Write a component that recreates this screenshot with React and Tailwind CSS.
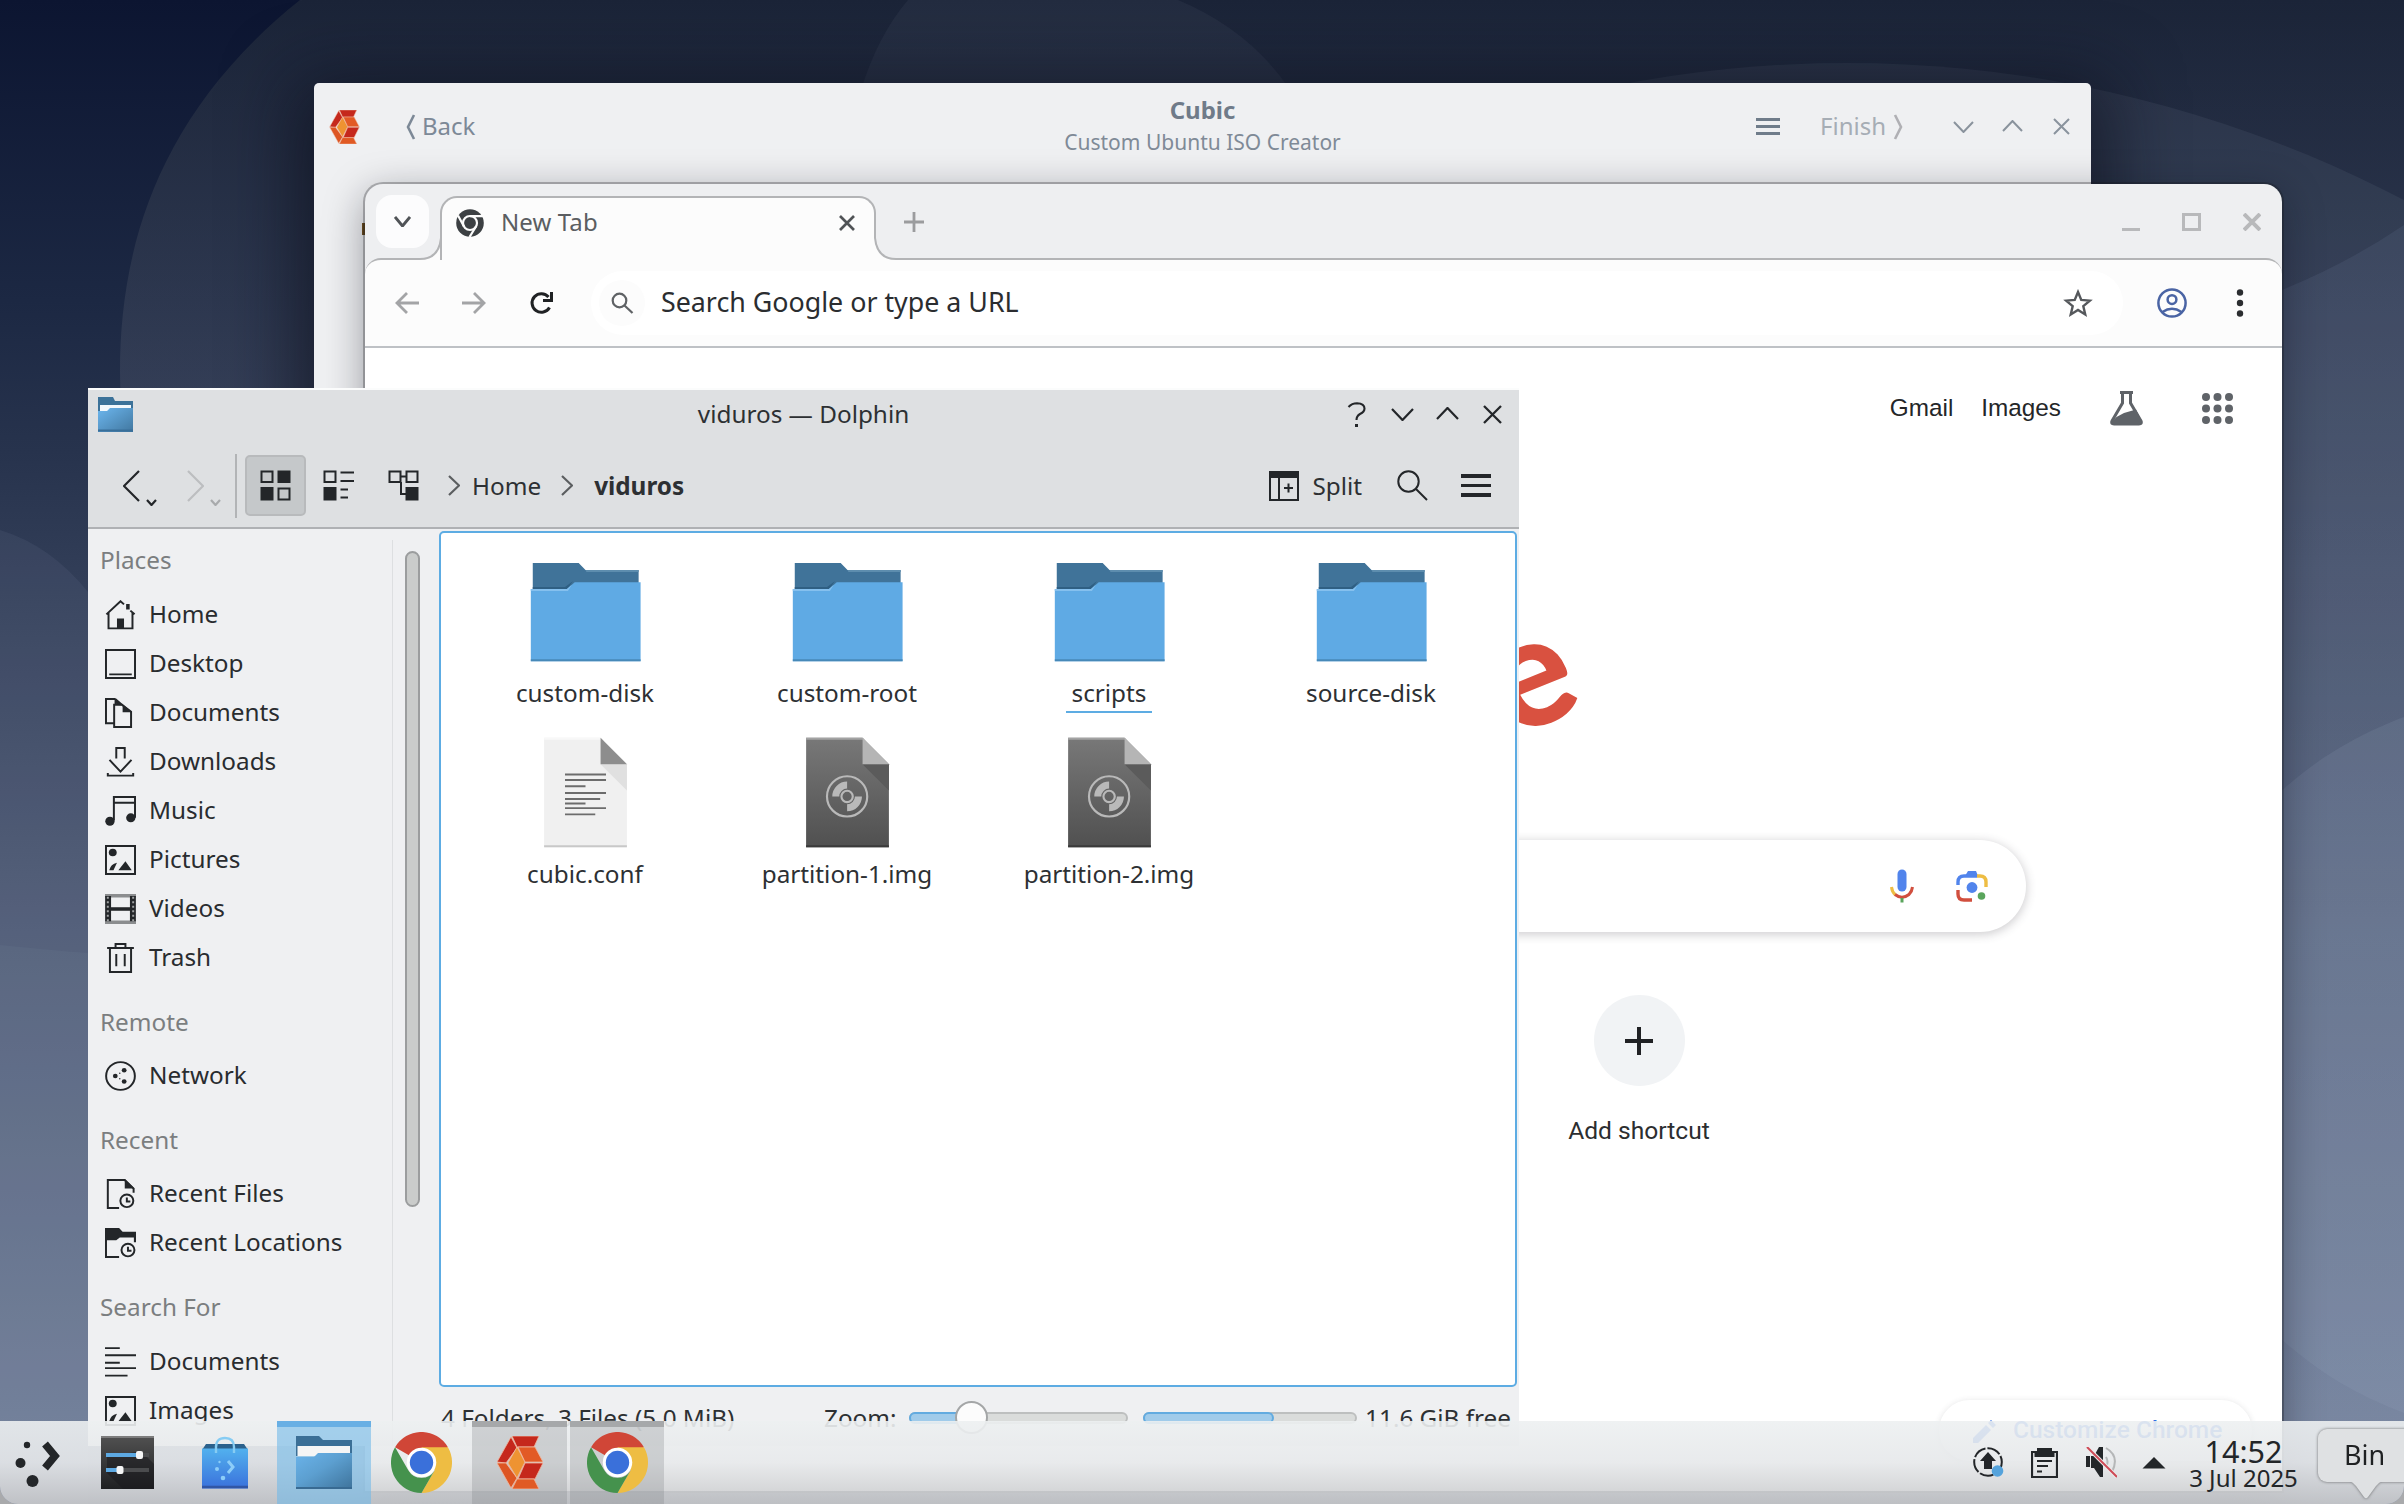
import React from "react";

const INK = "#232629";

/* ---------- wallpaper ---------- */
function Wallpaper() {
  return (
    <svg className="absolute inset-0" width="2404" height="1504" viewBox="0 0 2404 1504">
      <defs>
        <linearGradient id="sky" x1="0" y1="0" x2="0" y2="1">
          <stop offset="0" stopColor="#0c1531" />
          <stop offset="0.2" stopColor="#1c2843" />
          <stop offset="0.3" stopColor="#27334d" />
          <stop offset="0.62" stopColor="#505c76" />
          <stop offset="1" stopColor="#75829c" />
        </linearGradient>
        <linearGradient id="veil" gradientUnits="userSpaceOnUse" x1="0" y1="0" x2="0" y2="1504">
          <stop offset="0" stopColor="#3e4748" stopOpacity="0.3" />
          <stop offset="0.27" stopColor="#5b6176" stopOpacity="0.3" />
          <stop offset="0.6" stopColor="#77839c" stopOpacity="0.15" />
          <stop offset="1" stopColor="#8794ac" stopOpacity="0.1" />
        </linearGradient>
      </defs>
      <rect width="2404" height="1504" fill="url(#sky)" />
      <path d="M300 0 C150 120 120 260 120 372 C120 480 150 560 200 640 V1504 H2404 V0 Z" fill="url(#veil)" />
      <path d="M908 0 Q878 35 861 90 H1290 Q1250 30 1178 0 Z" fill="#e8ecff" opacity="0.045" />
      <circle cx="1847" cy="1263" r="1200" fill="#dfe6ff" opacity="0.06" />
      <path d="M2282 290 Q2350 262 2404 225 V1504 H2282 Z" fill="#8796b4" opacity="0.12" />
      <path d="M0 530 Q50 545 88 592 V1504 H0 Z" fill="#8a97b0" opacity="0.1" />
      <path d="M0 945 Q50 950 88 953 V1504 H0 Z" fill="#8a97b0" opacity="0.09" />
      <circle cx="2530" cy="1065" r="370" fill="#a5b6cc" opacity="0.12" />
    </svg>
  );
}

/* ---------- shared drawings ---------- */
function CubicLogo({ w, h }) {
  return (
    <svg width={w} height={h} viewBox="0 0 46 53" stroke="#f0b8a0" strokeWidth="0.8" strokeLinejoin="round">
      <path d="M15 0 H42 L37 11 H20 Z" fill="#c5281c" />
      <path d="M14 1 L20 12 L9 27 L0 26 Z" fill="#c5281c" />
      <path d="M0 27 L9 27 L20 42 L14 52 Z" fill="#dd5523" />
      <path d="M20 11 L28 26 L20 42 L11 27 Z" fill="#ee9332" />
      <path d="M21 11 H38 L46 26 H28 Z" fill="#e25a25" />
      <path d="M28 27 H46 L38 43 H21 Z" fill="#c5281c" />
      <path d="M20 43 H37 L42 53 H15 Z" fill="#e05a24" />
    </svg>
  );
}

function ChromeLogo() {
  return (
    <svg width="61" height="61" viewBox="0 0 48 48">
      <path d="M24 24 L3.2 12 A24 24 0 0 1 44.8 12 Z" fill="#d04637" />
      <path d="M24 12 H44.8 A24 24 0 0 1 24 48 L34.4 30 Z" fill="#eebd43" />
      <path d="M3.2 12 L13.6 30 A12 12 0 0 0 34.4 30 L24 48 A24 24 0 0 1 3.2 12 Z" fill="#45924d" />
      <circle cx="24" cy="24" r="11.6" fill="#fff" />
      <circle cx="24" cy="24" r="9.2" fill="#3a70da" />
    </svg>
  );
}

function Chevron({ dir = "down", w = 22, h = 12, color = INK, sw = 2.2 }) {
  const d = {
    down: `M1 1 L${w / 2} ${h - 1} L${w - 1} 1`,
    up: `M1 ${h - 1} L${w / 2} 1 L${w - 1} ${h - 1}`,
    left: `M${w - 1} 1 L1 ${h / 2} L${w - 1} ${h - 1}`,
    right: `M1 1 L${w - 1} ${h / 2} L1 ${h - 1}`,
  }[dir];
  return (
    <svg width={w} height={h} className="shrink-0" fill="none" stroke={color} strokeWidth={sw}>
      <path d={d} />
    </svg>
  );
}

function Cross({ s = 18, color = INK, sw = 2.3 }) {
  return (
    <svg width={s} height={s} className="shrink-0" stroke={color} strokeWidth={sw}>
      <path d={`M1 1 L${s - 1} ${s - 1} M${s - 1} 1 L1 ${s - 1}`} />
    </svg>
  );
}

/* ---------- Cubic window ---------- */
function CubicWindow() {
  return (
    <section className="absolute left-[314px] top-[83px] flex h-[1300px] w-[1777px] flex-col rounded-t-[5px] bg-[#eff0f2] shadow-[0_16px_70px_18px_rgba(10,12,24,0.6)]">
      <header className="grid h-[88px] grid-cols-[1fr_auto_1fr] items-center text-[24px] leading-[32px]">
        <div className="flex items-center pl-[15px] text-[#7d8997]">
          <CubicLogo w={31} h={34} />
          <svg width="10" height="26" className="ml-[46px]" fill="none" stroke="#7d8997" strokeWidth="2.6">
            <path d="M8 1 L2 13 L8 25" />
          </svg>
          <span className="mb-[2px] ml-[6px]">Back</span>
        </div>
        <div className="text-center text-[#6f7b89]">
          <div className="mt-[-2px] text-[24px] font-bold leading-[32px]">Cubic</div>
          <div className="text-[21px] leading-[32px] text-[#7f8a97]">Custom Ubuntu ISO Creator</div>
        </div>
        <div className="flex items-center justify-end pr-[21px] text-[#a6adb5]">
          <div className="mb-[1px] flex w-[24px] flex-col gap-[4px]">
            <i className="h-[3px] bg-[#6f7c8a]" />
            <i className="h-[3.5px] bg-[#6f7c8a]" />
            <i className="h-[3px] bg-[#6f7c8a]" />
          </div>
          <span className="mb-[2px] ml-[40px]">Finish</span>
          <svg width="10" height="26" className="ml-[7px]" fill="none" stroke="#b0b0b4" strokeWidth="2.6">
            <path d="M2 1 L8 13 L2 25" />
          </svg>
          <span className="ml-[50px] flex items-center gap-[29px]">
            <Chevron w={21} h={12} color="#8a939d" sw={2} />
            <span className="mb-[2px] ml-[-1px] mr-[1px]"><Chevron dir="up" w={21} h={12} color="#8a939d" sw={2} /></span>
            <span className="mb-[2px]"><Cross s={17} color="#8a939d" sw={2} /></span>
          </span>
        </div>
      </header>
      <i className="ml-[48px] mt-[52px] h-[12px] w-[3px] bg-[#6d4c1c]" />
    </section>
  );
}

/* ---------- Chrome window ---------- */
function TabFoot({ flip }) {
  return (
    <svg width="22" height="22" className={flip ? "z-10 ml-[-2px] -scale-x-100" : "z-10 mr-[-2px]"} fill="none">
      <path d="M0 22 V21 Q20 21 21 0 H22 V22 Z" fill="#fcfcfc" />
      <path d="M0 21 Q19 21 21 0" stroke="#b3b4b6" strokeWidth="2" />
    </svg>
  );
}

function ChromeWindow() {
  return (
    <section className="absolute left-[365px] top-[184px] flex h-[1307px] w-[1917px] flex-col rounded-t-[18px] bg-[#eeeff1] shadow-[0_0_0_2px_rgba(20,20,24,0.28),0_10px_40px_rgba(10,12,24,0.4)]">
      <div className="flex h-[76px] items-end">
        <button className="mb-[12px] ml-[11px] flex size-[53px] items-center justify-center rounded-[16px] bg-[#fcfcfd]">
          <Chevron w={17} h={11} color="#505357" sw={2.900} />
        </button>
        <div className="ml-[-9px] flex items-end">
          <TabFoot />
          <div className="z-10 flex h-[64px] w-[436px] items-center rounded-t-[17px] border-2 border-b-0 border-[#b3b4b6] bg-[#fcfcfc] pb-[13px] pl-[14px] pr-[19px]">
            <svg width="28" height="28" viewBox="0 0 28 28">
              <circle cx="14" cy="14" r="13.8" fill="#3c4043" />
              <circle cx="14" cy="14" r="7" fill="none" stroke="#fcfcfc" strokeWidth="2.2" />
              <path d="M14 7.2 H27 M8 17.5 L2 6.5 M20 17.5 L13.5 28" stroke="#fcfcfc" strokeWidth="2.2" />
            </svg>
            <span className="ml-[17px] flex-1 pb-[1px] text-[24px] leading-[32px] tracking-[0.1px] text-[#5b5e61]">New Tab</span>
            <Cross s={16} color="#505356" sw={2.700} />
          </div>
          <TabFoot flip />
        </div>
        <svg width="20" height="20" className="mb-[28px] ml-[8px]" stroke="#9b9c9e" strokeWidth="2.8">
          <path d="M10 0 V20 M0 10 H20" />
        </svg>
        <div className="mb-[29px] ml-auto mr-[21px] flex items-end gap-[42px]">
          <i className="h-[3.5px] w-[18px] bg-[#b8b9bb]" />
          <i className="h-[18px] w-[19px] border-[3.5px] border-[#b8b9bb]" />
          <Cross s={18} color="#b8b9bb" sw={4} />
        </div>
      </div>
      <div className="mt-[-2px] flex h-[90px] shrink-0 items-center rounded-t-[16px] border-b-2 border-t-2 border-b-[#bec1c5] border-t-[#b3b4b6] bg-[#fcfcfc] pl-[30px]">
        <svg width="24" height="22" fill="none" stroke="#a3a4a6" strokeWidth="2.8">
          <path d="M24 11 H2 M12 1 L2 11 L12 21" />
        </svg>
        <svg width="24" height="22" className="ml-[43px]" fill="none" stroke="#a3a4a6" strokeWidth="2.8">
          <path d="M0 11 H22 M12 1 L22 11 L12 21" />
        </svg>
        <svg width="24" height="24" className="ml-[43px]" fill="none" stroke="#202224" strokeWidth="3">
          <path d="M20.5 16.5 A9.3 9.3 0 1 1 19.5 6" />
          <path d="M22.5 1 V9.5 H14" />
        </svg>
        <div className="ml-[38px] flex h-[64px] w-[1532px] items-center rounded-full bg-white pl-[8px] pr-[30px]">
          <span className="flex size-[46px] items-center justify-center rounded-full bg-[#fcfcfc]">
            <svg width="23" height="22" fill="none" stroke="#5f6265" strokeWidth="2.2">
              <circle cx="8.5" cy="8.5" r="6.8" />
              <path d="M13.5 13.5 L21.5 21" />
            </svg>
          </span>
          <span className="ml-[16px] flex-1 whitespace-nowrap pb-[2px] text-[26.800px] leading-[34px] text-[#2b2d30]">
            Search Google or type a URL
          </span>
          <svg width="30" height="29" viewBox="0 0 24 24" fill="none" stroke="#55585c" strokeWidth="2">
            <path d="M12 2.5 L14.7 9 L21.8 9.6 L16.4 14.2 L18 21.1 L12 17.4 L6 21.1 L7.6 14.2 L2.2 9.6 L9.3 9 Z" />
          </svg>
        </div>
        <svg width="30" height="30" className="ml-[34px]" fill="none" stroke="#4a64a4" strokeWidth="2.5">
          <circle cx="15" cy="15" r="13.6" />
          <circle cx="15" cy="11.6" r="4.4" />
          <path d="M5.5 24 Q15 17.5 24.5 24" />
        </svg>
        <svg width="8" height="28" className="ml-[49px]" fill="#2b2d30">
          <circle cx="4" cy="3.5" r="3.2" />
          <circle cx="4" cy="14" r="3.2" />
          <circle cx="4" cy="24.5" r="3.2" />
        </svg>
      </div>
      <div className="flex flex-1 flex-col bg-white">
        <div className="mt-[40px] flex h-[40px] items-center justify-end pr-[49px] font-['Liberation_Sans',Arial,sans-serif] text-[24.300px] text-[#242628]">
          <span>Gmail</span>
          <span className="ml-[28px]">Images</span>
          <svg width="35" height="35" className="ml-[48px]" viewBox="0 0 35 35">
            <path d="M11 1.5 H24 M13.5 2 V12 L3 30 Q1.5 33 5 33 H30 Q33.5 33 32 30 L21.500 12 V2" fill="none" stroke="#5f6368" strokeWidth="3" />
            <path d="M7.500 26 L15 22 L27 18.500 L33 31 L30 34 H4 L2.500 31 Z" fill="#5f6368" />
          </svg>
          <svg width="31" height="31" className="ml-[58px]" fill="#5f6368">
            {[4, 15.5, 27].map((y) => [4, 15.500, 27].map((x) => <circle key={x + "-" + y} cx={x} cy={y} r="4" />))}
          </svg>
        </div>
        <div className="ml-[1119px] mt-[150px] flex h-[180px] w-[84px] items-center justify-center">
          <span className="-rotate-[22deg] font-['Lato',sans-serif] text-[154px] font-black leading-[180px] text-[#d95140]">e</span>
        </div>
        <div className="ml-[255px] mt-[82px] flex h-[92px] w-[1406px] items-center justify-end rounded-full bg-white pr-[38px] shadow-[0_2px_10px_1px_rgba(64,60,67,0.24)]">
          <svg width="24" height="34" fill="none" strokeWidth="3">
            <path d="M1.500 18 Q2 23 5.500 26" stroke="#eebd43" />
            <path d="M5 25.500 Q12 31 19 25.500 Q22 22.500 22.500 18" stroke="#d14f3e" />
            <path d="M12 29 V33.500" stroke="#5aa55c" />
            <rect x="7.500" y="0.500" width="9" height="22" rx="4.500" fill="#5184ec" />
          </svg>
          <svg width="32" height="32" className="ml-[42px]" fill="none" strokeWidth="3.400">
            <path d="M2 15 V12 Q2 6 8 6 H21" stroke="#5184ec" />
            <path d="M9 6 L12 1 H20 L22.500 7 H9 Z" fill="#5184ec" />
            <path d="M21 6 H24 Q30 6 30 12 V17" stroke="#eebd43" />
            <path d="M2 20 V24 Q2 30 8 30 H16" stroke="#d14f3e" />
            <circle cx="16" cy="17.500" r="5.400" fill="#5184ec" />
            <circle cx="25.500" cy="26" r="3.800" fill="#5aa55c" />
          </svg>
        </div>
        <div className="ml-[1174px] mt-[63px] flex w-[200px] flex-col items-center">
          <span className="flex size-[91px] items-center justify-center rounded-full bg-[#f1f3f5]">
            <svg width="28" height="28" stroke="#202124" strokeWidth="4">
              <path d="M14 0 V28 M0 14 H28" />
            </svg>
          </span>
          <span className="mt-[29px] font-['Roboto',sans-serif] text-[24.600px] leading-[32px] text-[#2c2e30]">Add shortcut</span>
        </div>
        <div className="mb-[30px] mr-[30px] mt-auto flex h-[61px] w-[313px] items-center self-end rounded-full bg-white pl-[34px] pb-[3px] shadow-[0_1px_6px_rgba(60,64,67,0.16)]">
          <svg width="23" height="23" fill="#2f6fe4" className="mt-[4px]">
            <path d="M0 23 V18 L13 5 L18 10 L5 23 Z M15 3 L18 0 L23 5 L20 8 Z" />
          </svg>
          <span className="ml-[17px] mt-[2px] whitespace-nowrap font-['Roboto',sans-serif] text-[24.500px] font-medium tracking-[0px] text-[#2f6fe4]">Customize Chrome</span>
        </div>
      </div>
    </section>
  );
}

/* ---------- Dolphin sidebar icons (22 px grid) ---------- */
const clock = (
  <g>
    <circle cx="15.500" cy="16" r="4.600" />
    <path d="M15.500 13.500 V16.500 H18" />
  </g>
);
const ICONS = {
  home: (
    <g>
      <path d="M1 10.500 L11 0.900 L13.500 3.200 M18 7.800 L21 10.500 M2.500 9.500 V20.800 H19.500 V9.500" />
      <path d="M15 3 H17.500 V7 H15 Z M8.500 13.500 H13.500 V21 H8.500 Z" fill={INK} stroke="none" />
    </g>
  ),
  desktop: <path d="M0.700 0.700 H21.300 V21.300 H0.700 Z M3 18.600 H19" />,
  documents: (
    <g>
      <path d="M6 18.500 H0.700 V0.700 H7.500 M6.500 5 H12 L18.500 10 V21.300 H6.500 Z M7.500 0.700 V5" />
      <path d="M7.500 0 L19.200 10.500 H12.500 V5.500 L8 5 Z" fill={INK} stroke="none" />
    </g>
  ),
  downloads: <path d="M8 8.500 V0.700 H14 V8.500 M3.200 9.500 L11 18 L18.800 9.500 M2 19 V21 H20 V19" />,
  music: (
    <g>
      <path d="M6.300 18 V0.700 H21.300 V16 M6.300 5 H21.300" />
      <circle cx="3.500" cy="18.500" r="3.300" fill={INK} stroke="none" />
      <circle cx="18.300" cy="16" r="3.300" fill={INK} stroke="none" />
    </g>
  ),
  pictures: (
    <g>
      <path d="M0.700 0.700 H21.300 V21.300 H0.700 Z" />
      <circle cx="5.500" cy="5.500" r="2.800" fill={INK} stroke="none" />
      <path d="M3 18.500 Q4 14 8.500 13 L6 18.500 Z M9.500 18.500 L14.500 12 L19 18.500 Z" fill={INK} stroke="none" />
    </g>
  ),
  videos: (
    <g>
      <path d="M0 1.200 H22 M0 20.800 H22" stroke="#8b8d8f" strokeWidth="2.600" />
      <path d="M2.200 1.500 V20 M19.800 1.500 V20" strokeWidth="4.200" />
      <path d="M2 2 V20 M20 2 V20" stroke="#a0a2a3" strokeDasharray="1.500 1.800" />
      <path d="M3 11 H19" strokeWidth="2.600" />
    </g>
  ),
  trash: <path d="M1.500 3.700 H20.500 M7.500 3.500 V0.700 H14.500 V3.500 M3.500 4 V21.300 H18.500 V4 M8 8 V17 M14 8 V17" />,
  network: (
    <g>
      <circle cx="11" cy="11" r="10.200" />
      <g fill={INK} stroke="none">
        <circle cx="7.300" cy="11" r="1.700" />
        <circle cx="13.600" cy="6.800" r="1.700" />
        <circle cx="13.600" cy="15" r="1.700" />
        <circle cx="10.500" cy="9" r="0.500" />
        <circle cx="10.500" cy="13" r="0.500" />
      </g>
    </g>
  ),
  recentFiles: (
    <g>
      <path d="M10 21.300 H2 V0.700 H14 L20.300 7 V10" />
      <path d="M14 0 L21 7 H14 Z" fill={INK} stroke="none" />
      {clock}
    </g>
  ),
  recentFolders: (
    <g>
      <path d="M10 21.300 H0.700 V5" />
      <path d="M0 0 H10 L12.500 2.800 H22 V10.500 H20.500 V7 H10.500 L8 9 H0 Z" fill={INK} stroke="none" />
      <g transform="translate(0.800 0.200)">{clock}</g>
    </g>
  ),
  lines: <path d="M0 0.800 H10.500 M0 6 H22 M0 11.500 H10.500 M0 15.500 H22 M0 21 H16" />,
};

const PLACES = [
  ["Places", [["home", "Home"], ["desktop", "Desktop"], ["documents", "Documents"], ["downloads", "Downloads"], ["music", "Music"], ["pictures", "Pictures"], ["videos", "Videos"], ["trash", "Trash"]]],
  ["Remote", [["network", "Network"]]],
  ["Recent", [["recentFiles", "Recent Files"], ["recentFolders", "Recent Locations"]]],
  ["Search For", [["lines", "Documents"], ["pictures", "Images"]]],
];

function Sidebar() {
  return (
    <aside className="mt-[-8px] w-[304px] shrink-0 pl-[12px] text-[24.300px]">
      {PLACES.map(([title, rows]) => (
        <div key={title}>
          <h3 className="flex h-[69.3px] items-end pb-[14px] leading-[32px] text-[#7b7e80]">{title}</h3>
          {rows.map(([icon, label]) => (
            <div key={label} className="flex h-[49px] items-center pl-[5px] text-[#292c2f]">
              <svg width="31" height="30" viewBox="0 0 22 22" preserveAspectRatio="none" className="shrink-0" fill="none" stroke={INK} strokeWidth="1.400">
                {ICONS[icon]}
              </svg>
              <span className="ml-[13px] whitespace-nowrap pb-[2px] leading-[32px]">{label}</span>
            </div>
          ))}
        </div>
      ))}
    </aside>
  );
}

/* ---------- Dolphin file icons (64 px grid) ---------- */
function FolderIcon() {
  return (
    <svg width="125" height="125" viewBox="0 0 64 64">
      <path d="M5 7.200 H28.500 L32 10.800 H59.200 V24 H5 Z" fill="#407399" />
      <path d="M32 10.800 H59.200 V11.800 H32.500 Z" fill="#5d8dae" />
      <path d="M5 19.400 H21.500 L25.500 16.500 L22.500 21 H5 Z" fill="#2f5f83" />
      <path d="M4 20.500 H22.500 L26.500 17 H60.200 V57.500 H4 Z" fill="#5faae4" />
      <path d="M4 20.500 H22.500 L25 18.300 L23 21.500 H4 Z" fill="#85c0ee" />
      <path d="M4 56.500 H60.200 V57.500 H4 Z" fill="#4789b8" />
    </svg>
  );
}

function PageIcon({ dark }) {
  return (
    <svg width="125" height="125" viewBox="0 0 64 64">
      <defs>
        <linearGradient id="pgDark" x1="0" y1="0" x2="0" y2="1">
          <stop offset="0" stopColor="#787878" />
          <stop offset="1" stopColor="#505050" />
        </linearGradient>
      </defs>
      <path d="M10.800 4 H39.700 L53.200 17.500 V60 H10.800 Z" fill={dark ? "url(#pgDark)" : "#f0f0f0"} />
      <path d="M10.800 4 H39.700 L40.700 5 H10.800 Z" fill={dark ? "#a3a3a3" : "#f8f8f8"} />
      <path d="M10.800 59 H53.200 V60 H10.800 Z" fill={dark ? "#3a3a3a" : "#c8c8c8"} />
      <path d="M39.700 17.500 H53.200 V31 Z" fill={dark ? "#5b5b5b" : "#e0e0e0"} />
      <path d="M39.700 4 L53.200 17.500 H39.700 Z" fill={dark ? "#b5b5b5" : "#8d8d8d"} />
      {dark ? (
        <g fill="none" stroke="#b9b9b9" strokeWidth="1.100">
          <circle cx="31.800" cy="34" r="10.300" />
          <circle cx="31.800" cy="34" r="2.900" />
          <path d="M26 34 A5.800 5.800 0 0 1 31.800 28.200 M37.600 34 A5.800 5.800 0 0 1 31.800 39.800" strokeWidth="3.600" />
        </g>
      ) : (
        <path
          d="M21.500 22.800 H42.500 M21.500 25.600 H42.500 M21.500 28.800 H32 M21.500 32.300 H42.500 M21.500 35.300 H39.500 M21.500 37.600 H32 M21.500 40 H42.500 M21.500 43.200 H37"
          stroke="#6c6c6c"
          strokeWidth="1"
        />
      )}
    </svg>
  );
}

const FILES = [
  ["custom-disk", "folder"],
  ["custom-root", "folder"],
  ["scripts", "folder"],
  ["source-disk", "folder"],
  ["cubic.conf", "text"],
  ["partition-1.img", "image"],
  ["partition-2.img", "image"],
];

function FileView() {
  return (
    <div className="h-[856px] rounded-[5px] border-2 border-[#5dace3] bg-white pl-[13px] pt-[16px]">
      <div className="grid w-[1048px] grid-cols-4">
        {FILES.map(([name, kind]) => (
          <div key={name} className="flex h-[181px] flex-col items-center">
            {kind === "folder" ? <FolderIcon /> : <PageIcon dark={kind === "image"} />}
            <span
              className={
                name === "scripts"
                  ? "mt-[2px] border-b-[2.500px] border-[#5dace3] px-[6px] pb-[2px] text-[24.300px] leading-[33px] text-[#2d3033]"
                  : "mt-[2px] text-[24.300px] leading-[33px] text-[#2d3033]"
              }
            >
              {name}
            </span>
          </div>
        ))}
      </div>
    </div>
  );
}

/* ---------- Dolphin window ---------- */
function DolphinWindow() {
  return (
    <section className="absolute left-[88px] top-[388px] flex h-[1058px] w-[1431px] flex-col overflow-hidden bg-[#eff0f2] text-[24.300px] text-[#2d3033]">
      <div className="shrink-0 border-b-2 border-t-2 border-b-[#afb1b4] border-t-[#fbfcfc] bg-[#dee0e2]">
        <div className="grid h-[50px] grid-cols-[1fr_auto_1fr] items-center">
          <svg width="36" height="35" className="mb-[1px] ml-[10px]">
            <defs>
              <linearGradient id="smf" x1="0" y1="0" x2="1" y2="1">
                <stop offset="0" stopColor="#6cb6ee" />
                <stop offset="1" stopColor="#41779f" />
              </linearGradient>
            </defs>
            <path d="M0 0 H15 L17 4 H35 V14 H0 Z" fill="#3c7299" />
            <path d="M2 8 H33 V15 H2 Z" fill="#f3f8fc" />
            <path d="M0 14 H9 L12 11 H35 V35 H0 Z" fill="url(#smf)" />
            <path d="M0 32.500 H35 V34.500 H0 Z" fill="#396f99" />
          </svg>
          <span className="pb-[2px] leading-[32px]">viduros — Dolphin</span>
          <div className="flex items-center justify-end pb-[1px] pr-[17px]">
            <svg width="19" height="25" fill="none" stroke={INK} strokeWidth="2.100">
              <path d="M1.500 5 Q5 1.200 10 1.200 Q17.500 1.500 17.500 6.500 Q17.500 10 13 12 Q9.500 14 9.500 18" />
              <path d="M8 23.500 H11" strokeWidth="3" />
            </svg>
            <span className="ml-[25px]"><Chevron w={23} h={13} /></span>
            <span className="mb-[2px] ml-[22px]"><Chevron dir="up" w={23} h={13} /></span>
            <span className="ml-[24px]"><Cross s={19} /></span>
          </div>
        </div>
        <div className="flex h-[87px] items-center pl-[35px] pt-[4px]">
          <span className="flex items-end">
            <Chevron dir="left" w={17} h={32} />
            <span className="mb-[-4px] ml-[6px]"><Chevron w={11} h={7} /></span>
          </span>
          <span className="ml-[30px] flex items-end">
            <Chevron dir="right" w={17} h={32} color="#bcbec0" />
            <span className="mb-[-4px] ml-[6px]"><Chevron w={11} h={7} color="#a8aaac" /></span>
          </span>
          <i className="ml-[14px] h-[64px] w-[2px] bg-[#b2b4b6]" />
          <span className="ml-[8px] flex size-[61px] items-center justify-center rounded-[5px] border-2 border-[#b8babc] bg-[#c5c8ca]">
            <svg width="31" height="31" fill="none" stroke={INK} strokeWidth="2">
              <path d="M1.500 1.500 H12.500 V12 H1.500 Z M18.500 18.500 H29.500 V29.500 H18.500 Z" />
              <path d="M17.500 0.500 H30.500 V13 H17.500 Z M0.500 17 H13.500 V30.500 H0.500 Z" fill={INK} stroke="none" />
            </svg>
          </span>
          <svg width="31" height="31" className="ml-[17px]" fill="none" stroke={INK} strokeWidth="2">
            <path d="M1.500 1.500 H12.500 V12 H1.500 Z M17.500 2.500 H31 M17.500 11 H31 M17.500 19.500 H25 M17.500 27.500 H25" />
            <path d="M0.500 17 H13.500 V30.500 H0.500 Z" fill={INK} stroke="none" />
          </svg>
          <svg width="31" height="31" className="ml-[34px]" fill="none" stroke={INK} strokeWidth="2">
            <path d="M1.500 1.500 H12.500 V12 H1.500 Z M18.500 1.500 H29.500 V12 H18.500 Z M12.500 6.500 H18.500 M13 12 V24 H19" />
            <path d="M17.500 17 H30.500 V30.500 H17.500 Z" fill={INK} stroke="none" />
          </svg>
          <span className="ml-[29px]"><Chevron dir="right" w={12} h={21} color="#5b5e60" /></span>
          <span className="ml-[12px] leading-[32px]">Home</span>
          <span className="ml-[20px]"><Chevron dir="right" w={12} h={21} color="#5b5e60" /></span>
          <span className="ml-[21px] font-bold leading-[32px]">viduros</span>
          <div className="ml-auto flex items-center pr-[28px]">
            <svg width="30" height="30" fill="none" stroke={INK} strokeWidth="2">
              <path d="M1 1 H29 V29 H1 Z M10 5 V29 M19.500 12.500 V21.500 M15 17 H24" />
              <path d="M0 0 H30 V7 H0 Z" fill={INK} stroke="none" />
            </svg>
            <span className="ml-[13px] leading-[32px]">Split</span>
            <svg width="31" height="31" className="ml-[35px]" fill="none" stroke={INK} strokeWidth="2">
              <circle cx="11.500" cy="11.500" r="10.200" />
              <path d="M19 19 L30 30" />
            </svg>
            <div className="ml-[33px] flex w-[30px] flex-col gap-[6px]">
              <i className="h-[3.500px] bg-[#232629]" />
              <i className="h-[3.500px] bg-[#232629]" />
              <i className="h-[3.500px] bg-[#232629]" />
            </div>
          </div>
        </div>
      </div>
      <div className="flex min-h-0 flex-1">
        <Sidebar />
        <div className="mt-[11px] flex w-[47px] shrink-0 border-l-[1.500px] border-[#dddfe1] pl-[12px] pt-[11px]">
          <i className="h-[656px] w-[15px] rounded-full border-2 border-[#9b9d9e] bg-[#cacccb]" />
        </div>
        <main className="flex-1 pr-[2px] pt-[2px]">
          <FileView />
          <footer className="flex h-[62px] items-center pl-[2px] pr-[6px]">
            <span className="w-[383px] whitespace-nowrap leading-[32px]">4 Folders, 3 Files (5.0 MiB)</span>
            <span className="leading-[32px]">Zoom:</span>
            <div className="relative ml-[12px] flex h-[12px] w-[219px] overflow-visible rounded-full border-2 border-[#bdbfbf] bg-[#dadcdb]">
              <i className="-m-[2px] w-[62px] rounded-l-full border-2 border-[#62abe0] bg-[#a0cbea]" />
              <i className="absolute left-[44px] top-[-13px] size-[33px] rounded-full border-2 border-[#a4a6a7] bg-[#fcfcfc]" />
            </div>
            <div className="ml-[15px] flex h-[12px] w-[214px] rounded-full border-2 border-[#bdbfbf] bg-[#dadcdb]">
              <i className="-m-[2px] w-[131px] rounded-full border-2 border-[#62abe0] bg-[#a0cbea]" />
            </div>
            <span className="ml-auto whitespace-nowrap leading-[32px]">11.6 GiB free</span>
          </footer>
        </main>
      </div>
    </section>
  );
}

/* ---------- task bar ---------- */
function Launcher() {
  return (
    <svg width="46" height="50" fill={INK}>
      <circle cx="12" cy="7" r="3.200" />
      <circle cx="5.500" cy="25" r="5" />
      <circle cx="17.500" cy="43" r="6" />
      <path d="M30 6 L40 18 L30 30" fill="none" stroke={INK} strokeWidth="7.500" strokeLinejoin="miter" />
    </svg>
  );
}

function SettingsIcon() {
  return (
    <svg width="53" height="53">
      <defs>
        <linearGradient id="setg" x1="0" y1="0" x2="0" y2="1">
          <stop offset="0" stopColor="#515151" />
          <stop offset="1" stopColor="#1f2022" />
        </linearGradient>
      </defs>
      <rect width="53" height="53" fill="url(#setg)" />
      <path d="M6 21 L40 15 L53 28 V53 H22 L6 37 Z" fill="#17181b" opacity="0.5" />
      <path d="M0 1 H53" stroke="#7d7d7d" strokeWidth="2" />
      <path d="M5 19 H48 M5 34 H48" stroke="#4b4c4e" strokeWidth="4" />
      <path d="M5 19 H36 M5 34 H16" stroke="#5da9e2" strokeWidth="4" />
      <rect x="35" y="15" width="7" height="8" rx="2" fill="#f5f5f5" />
      <rect x="15.500" y="30" width="7" height="8" rx="2" fill="#f5f5f5" />
    </svg>
  );
}

function DiscoverIcon() {
  return (
    <svg width="46" height="53">
      <defs>
        <linearGradient id="disg" x1="0" y1="0" x2="0" y2="1">
          <stop offset="0" stopColor="#52b1ee" />
          <stop offset="1" stopColor="#3a71dc" />
        </linearGradient>
      </defs>
      <path d="M4 8 H42 L46 14 H0 Z" fill="#2b618c" />
      <rect y="12.500" width="46" height="40" fill="url(#disg)" />
      <path d="M0 51 H46" stroke="#3156a5" strokeWidth="2.500" />
      <path d="M14 17 V11 Q14 2 23 2 Q32 2 32 11 V17" fill="none" stroke="#86ccf3" strokeWidth="2.400" />
      <g fill="#8ccdf8">
        <circle cx="17.500" cy="26" r="1.200" />
        <circle cx="15" cy="33" r="2" />
        <circle cx="21" cy="42" r="2.300" />
        <path d="M26 25 L31 31 L26 37" fill="none" stroke="#8ccdf8" strokeWidth="3" />
      </g>
    </svg>
  );
}

function FilesIcon() {
  return (
    <svg width="56" height="53">
      <defs>
        <linearGradient id="fig" x1="0" y1="0" x2="1" y2="1">
          <stop offset="0" stopColor="#6ab3ea" />
          <stop offset="0.450" stopColor="#5c9fd0" />
          <stop offset="1" stopColor="#3e739b" />
        </linearGradient>
      </defs>
      <path d="M0 0 H23 L27 4 H56 V20 H0 Z" fill="#3b6f96" />
      <path d="M1.500 10 H54 V20 H1.500 Z" fill="#f5f5f5" />
      <path d="M0 21 H18 L22 17 H56 V53 H0 Z" fill="url(#fig)" />
      <path d="M0 51 H56 V53 H0 Z" fill="#386a92" />
    </svg>
  );
}

function Taskbar() {
  return (
    <footer className="absolute inset-x-0 bottom-0 flex h-[83px] bg-linear-to-b from-[rgba(237,240,241,0.9)] via-[rgba(230,232,234,0.9)] to-[rgba(199,200,202,0.9)]">
      <div className="flex w-[78px] items-center pl-[15px]"><Launcher /></div>
      <div className="flex w-[98px] items-center justify-center"><SettingsIcon /></div>
      <div className="flex w-[98px] items-center justify-center"><DiscoverIcon /></div>
      <div className="flex w-[98px] justify-center">
        <div className="ml-[1px] flex w-[94px] items-center justify-center border-t-[6px] border-[#68afe4] bg-[rgba(110,184,232,0.58)] pb-[6px]"><FilesIcon /></div>
      </div>
      <div className="flex w-[98px] items-center justify-center"><ChromeLogo /></div>
      <div className="flex w-[98px] justify-center">
        <div className="ml-[1px] flex w-[95px] items-center justify-center border-t-[6px] border-[#a6a8aa] bg-[rgba(120,122,126,0.26)] pb-[6px]"><CubicLogo w={46} h={53} /></div>
      </div>
      <div className="flex w-[98px] justify-center">
        <div className="flex w-[94px] items-center justify-center border-t-[6px] border-[#a6a8aa] bg-[rgba(120,122,126,0.26)] pb-[6px]"><ChromeLogo /></div>
      </div>
      <div className="ml-auto mr-[105px] flex items-center">
        <svg width="31" height="31" fill="none" stroke={INK} strokeWidth="2">
          <circle cx="15" cy="15" r="13.800" strokeDasharray="14 2" />
          <path d="M15 5 L23 14 H19 V22 H11 V14 H7 Z" fill={INK} stroke="none" />
          <circle cx="24.500" cy="24" r="5.800" fill="#55a3dc" stroke="none" />
        </svg>
        <svg width="27" height="30" className="ml-[27px]" fill="none" stroke={INK} strokeWidth="2.200">
          <path d="M1 4 H26 V29 H1 Z" />
          <path d="M3.500 9 V3 H6 V0 H21 V3 H23.500 V9 Z" fill={INK} stroke="none" />
          <path d="M6 13 H21 M6 18 H17 M6 23.500 H11" strokeWidth="1.800" />
        </svg>
        <svg width="31" height="31" className="ml-[28px]" fill="none">
          <path d="M0 9 H4 V20 H0 Z M5 9 H8 L13 0 H17 V30 H14 L8 21 H5 Z" fill={INK} />
          <path d="M20 10 Q23 15 20 20 M20 1 Q34 9 26 25" stroke="#b5b7b8" strokeWidth="2" />
          <path d="M1 0 L31 30" stroke="#eceded" strokeWidth="4" />
          <path d="M1 0 L31 30" stroke="#cf4a56" strokeWidth="2" />
        </svg>
        <svg width="24" height="12" className="ml-[25px]" fill={INK}>
          <path d="M12 0 L23.500 11.500 H0.500 Z" />
        </svg>
        <div className="ml-[22px] flex w-[111px] flex-col items-center whitespace-nowrap text-[#232629]">
          <span className="mt-[1px] text-[30.500px] leading-[30px]">14:52</span>
          <span className="text-[24px] leading-[24px]">3 Jul 2025</span>
        </div>
      </div>
    </footer>
  );
}

function BinTooltip() {
  return (
    <div className="absolute left-[2318px] top-[1429px] flex w-[100px] flex-col items-start drop-shadow-[0_0_1.500px_rgba(0,0,0,0.5)]">
      <div className="flex h-[53px] w-[100px] items-center rounded-[9px] bg-[#dfe1e3] pb-[1px] pl-[26px] text-[27px] text-[#1f2123]">Bin</div>
      <svg width="34" height="18" className="ml-[31px] mt-[-1px]" fill="#dfe1e3">
        <path d="M0 0 H34 Q30 1 27 5 L19 16 Q17 18.500 15 16 L7 5 Q4 1 0 0 Z" />
      </svg>
    </div>
  );
}

export default function App() {
  return (
    <div className="relative h-[1504px] w-[2404px] overflow-hidden bg-[#a9aaac] font-['Noto_Sans',sans-serif]">
      <div className="absolute inset-0 overflow-hidden rounded-b-[18px]">
        <Wallpaper />
        <CubicWindow />
        <ChromeWindow />
        <DolphinWindow />
        <Taskbar />
        <BinTooltip />
      </div>
    </div>
  );
}
